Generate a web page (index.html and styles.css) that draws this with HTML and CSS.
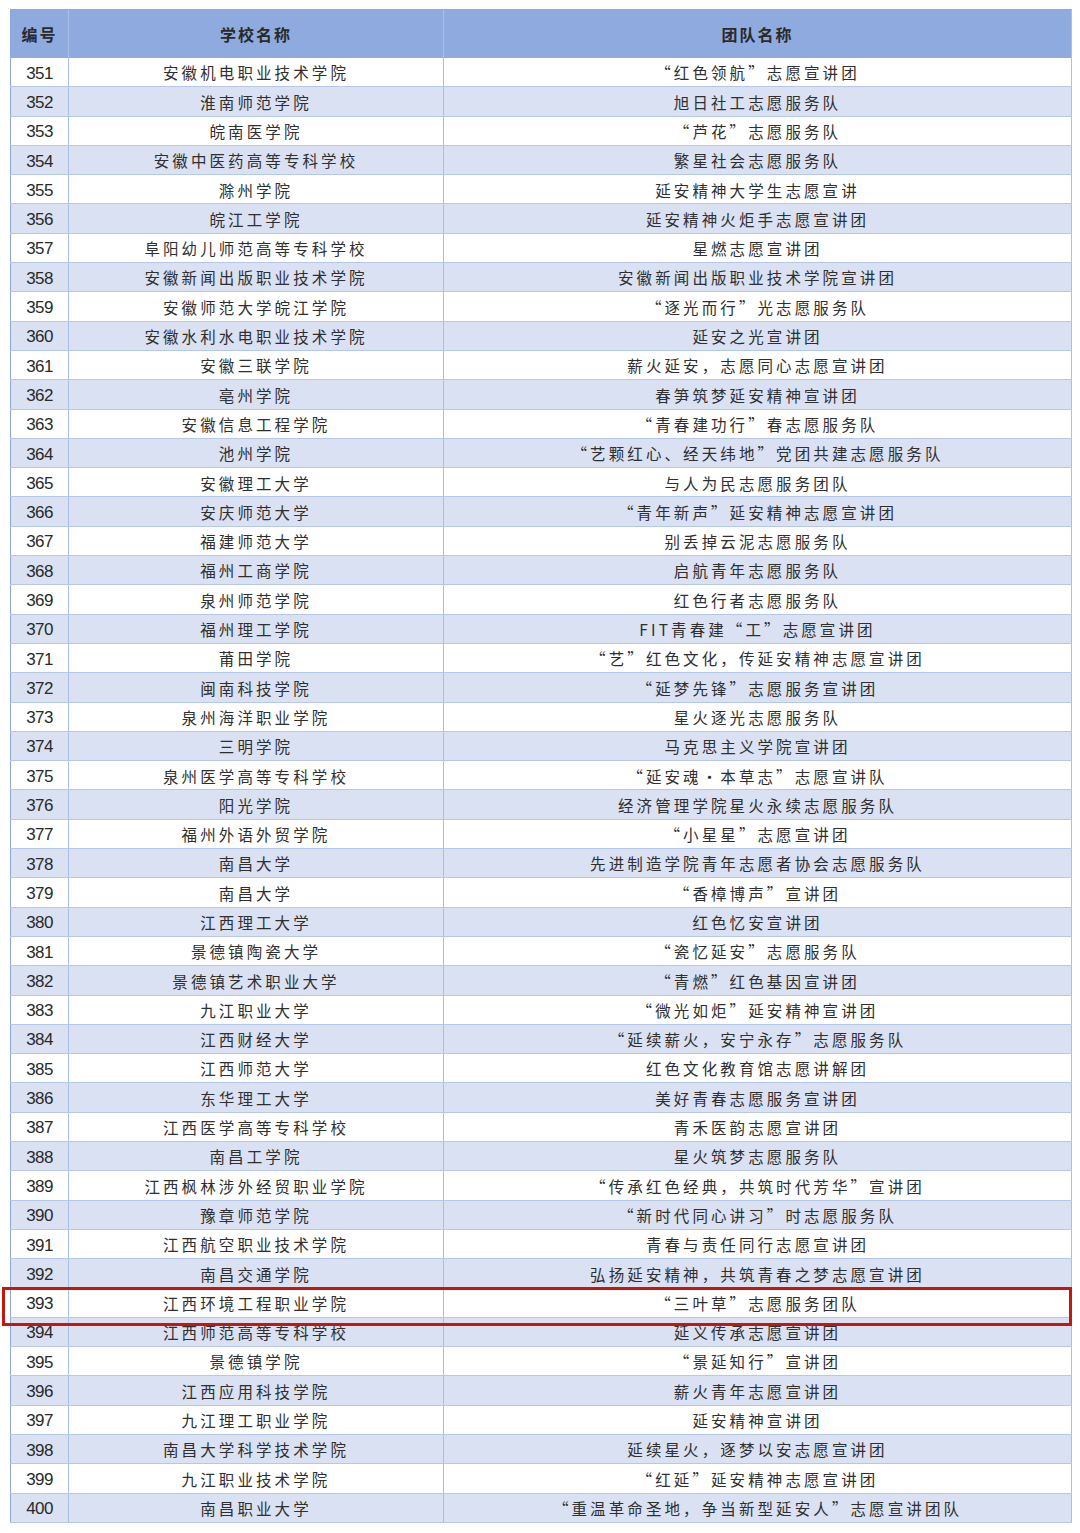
FILE: index.html
```html
<!DOCTYPE html>
<html lang="zh">
<head>
<meta charset="utf-8">
<link rel="stylesheet" href="styles.css">
</head>
<body>
<div class="page">
<table class="list">
<colgroup><col class="c-no"><col class="c-school"><col class="c-team"></colgroup>
<thead><tr><th>编号</th><th>学校名称</th><th>团队名称</th></tr></thead>
<tbody>
<tr><td class="no">351</td><td>安徽机电职业技术学院</td><td>“红色领航”志愿宣讲团</td></tr>
<tr><td class="no">352</td><td>淮南师范学院</td><td>旭日社工志愿服务队</td></tr>
<tr><td class="no">353</td><td>皖南医学院</td><td>“芦花”志愿服务队</td></tr>
<tr><td class="no">354</td><td>安徽中医药高等专科学校</td><td>繁星社会志愿服务队</td></tr>
<tr><td class="no">355</td><td>滁州学院</td><td>延安精神大学生志愿宣讲</td></tr>
<tr><td class="no">356</td><td>皖江工学院</td><td>延安精神火炬手志愿宣讲团</td></tr>
<tr><td class="no">357</td><td>阜阳幼儿师范高等专科学校</td><td>星燃志愿宣讲团</td></tr>
<tr><td class="no">358</td><td>安徽新闻出版职业技术学院</td><td>安徽新闻出版职业技术学院宣讲团</td></tr>
<tr><td class="no">359</td><td>安徽师范大学皖江学院</td><td>“逐光而行”光志愿服务队</td></tr>
<tr><td class="no">360</td><td>安徽水利水电职业技术学院</td><td>延安之光宣讲团</td></tr>
<tr><td class="no">361</td><td>安徽三联学院</td><td>薪火延安，志愿同心志愿宣讲团</td></tr>
<tr><td class="no">362</td><td>亳州学院</td><td>春笋筑梦延安精神宣讲团</td></tr>
<tr><td class="no">363</td><td>安徽信息工程学院</td><td>“青春建功行”春志愿服务队</td></tr>
<tr><td class="no">364</td><td>池州学院</td><td>“艺颗红心、经天纬地”党团共建志愿服务队</td></tr>
<tr><td class="no">365</td><td>安徽理工大学</td><td>与人为民志愿服务团队</td></tr>
<tr><td class="no">366</td><td>安庆师范大学</td><td>“青年新声”延安精神志愿宣讲团</td></tr>
<tr><td class="no">367</td><td>福建师范大学</td><td>别丢掉云泥志愿服务队</td></tr>
<tr><td class="no">368</td><td>福州工商学院</td><td>启航青年志愿服务队</td></tr>
<tr><td class="no">369</td><td>泉州师范学院</td><td>红色行者志愿服务队</td></tr>
<tr><td class="no">370</td><td>福州理工学院</td><td>FIT青春建“工”志愿宣讲团</td></tr>
<tr><td class="no">371</td><td>莆田学院</td><td>“艺”红色文化，传延安精神志愿宣讲团</td></tr>
<tr><td class="no">372</td><td>闽南科技学院</td><td>“延梦先锋”志愿服务宣讲团</td></tr>
<tr><td class="no">373</td><td>泉州海洋职业学院</td><td>星火逐光志愿服务队</td></tr>
<tr><td class="no">374</td><td>三明学院</td><td>马克思主义学院宣讲团</td></tr>
<tr><td class="no">375</td><td>泉州医学高等专科学校</td><td>“延安魂·本草志”志愿宣讲队</td></tr>
<tr><td class="no">376</td><td>阳光学院</td><td>经济管理学院星火永续志愿服务队</td></tr>
<tr><td class="no">377</td><td>福州外语外贸学院</td><td>“小星星”志愿宣讲团</td></tr>
<tr><td class="no">378</td><td>南昌大学</td><td>先进制造学院青年志愿者协会志愿服务队</td></tr>
<tr><td class="no">379</td><td>南昌大学</td><td>“香樟博声”宣讲团</td></tr>
<tr><td class="no">380</td><td>江西理工大学</td><td>红色忆安宣讲团</td></tr>
<tr><td class="no">381</td><td>景德镇陶瓷大学</td><td>“瓷忆延安”志愿服务队</td></tr>
<tr><td class="no">382</td><td>景德镇艺术职业大学</td><td>“青燃”红色基因宣讲团</td></tr>
<tr><td class="no">383</td><td>九江职业大学</td><td>“微光如炬”延安精神宣讲团</td></tr>
<tr><td class="no">384</td><td>江西财经大学</td><td>“延续薪火，安宁永存”志愿服务队</td></tr>
<tr><td class="no">385</td><td>江西师范大学</td><td>红色文化教育馆志愿讲解团</td></tr>
<tr><td class="no">386</td><td>东华理工大学</td><td>美好青春志愿服务宣讲团</td></tr>
<tr><td class="no">387</td><td>江西医学高等专科学校</td><td>青禾医韵志愿宣讲团</td></tr>
<tr><td class="no">388</td><td>南昌工学院</td><td>星火筑梦志愿服务队</td></tr>
<tr><td class="no">389</td><td>江西枫林涉外经贸职业学院</td><td>“传承红色经典，共筑时代芳华”宣讲团</td></tr>
<tr><td class="no">390</td><td>豫章师范学院</td><td>“新时代同心讲习”时志愿服务队</td></tr>
<tr><td class="no">391</td><td>江西航空职业技术学院</td><td>青春与责任同行志愿宣讲团</td></tr>
<tr><td class="no">392</td><td>南昌交通学院</td><td>弘扬延安精神，共筑青春之梦志愿宣讲团</td></tr>
<tr class="marked"><td class="no">393</td><td>江西环境工程职业学院</td><td>“三叶草”志愿服务团队</td></tr>
<tr><td class="no">394</td><td>江西师范高等专科学校</td><td>延义传承志愿宣讲团</td></tr>
<tr><td class="no">395</td><td>景德镇学院</td><td>“景延知行”宣讲团</td></tr>
<tr><td class="no">396</td><td>江西应用科技学院</td><td>薪火青年志愿宣讲团</td></tr>
<tr><td class="no">397</td><td>九江理工职业学院</td><td>延安精神宣讲团</td></tr>
<tr><td class="no">398</td><td>南昌大学科学技术学院</td><td>延续星火，逐梦以安志愿宣讲团</td></tr>
<tr><td class="no">399</td><td>九江职业技术学院</td><td>“红延”延安精神志愿宣讲团</td></tr>
<tr><td class="no">400</td><td>南昌职业大学</td><td>“重温革命圣地，争当新型延安人”志愿宣讲团队</td></tr>
</tbody>
</table>
<div class="highlight"></div>
</div>
</body>
</html>
```

FILE: styles.css
```css
html, body {
  margin: 0;
  padding: 0;
  background: #ffffff;
}

.page {
  position: relative;
  width: 1080px;
  height: 1533px;
  padding: 9px 0 0 10px;
  box-sizing: border-box;
}

.list {
  border-collapse: collapse;
  table-layout: fixed;
  width: 1061px;
  font-family: "Noto Sans CJK SC", "Noto Sans", sans-serif;
  color: #2f2f2f;
  border: 1px solid #8fa8da;
}

.c-no { width: 58px; }
.c-school { width: 375px; }
.c-team { width: 628px; }

.list th {
  height: 48px;
  padding: 0;
  background: #8eaadf;
  font-size: 16px;
  font-weight: 700;
  letter-spacing: 2px;
  color: #2a2a2a;
  border-right: 1px solid #a9bfe8;
  text-align: center;
  vertical-align: middle;
}

.list td {
  height: 26.3px;
  padding: 2px 0 0 0;
  font-size: 15.5px;
  letter-spacing: 3.1px;
  text-align: center;
  vertical-align: middle;
  line-height: 1;
  border-right: 1px solid #a9bfe8;
  border-bottom: 1px solid #b6c8ea;
  white-space: nowrap;
}

.list tbody tr:nth-child(even) td {
  background: #d9e1f3;
}

.list td.no {
  font-family: "Liberation Sans", Arial, sans-serif;
  font-size: 17px;
  letter-spacing: -0.6px;
  color: #2a2a2a;
}

.highlight {
  position: absolute;
  left: 2px;
  top: 1287px;
  width: 1070px;
  height: 39px;
  border: 3px solid #c4180e;
  box-sizing: border-box;
}
```
